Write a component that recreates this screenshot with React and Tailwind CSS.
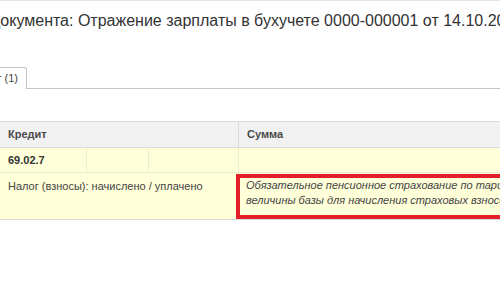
import React from "react";

export default function App() {
  const font = { fontFamily: '"Liberation Sans", Arial, sans-serif' };
  return (
    <div className="w-[500px] h-[300px] bg-white overflow-hidden relative" style={font}>
      <div className="h-[1px] bg-[#e4e4e4]" />
      <div className="pt-[10px] -ml-[9px] whitespace-nowrap text-[16px] leading-[19px] text-[#333]">
        документа: Отражение зарплаты в бухучете 0000-000001 от 14.10.2016 12:00:00
      </div>
      <div className="mt-[37px] flex items-end">
        <div className="-ml-[20px] w-[47px] h-[22px] border-t border-r border-[#c4c4c4] rounded-tr-[3px] flex items-center justify-end pr-[8px] text-[11px] text-[#444] whitespace-nowrap">
          ет (1)
        </div>
        <div className="flex-1 h-[1px] bg-[#c4c4c4]" />
      </div>
      <div className="mt-[32px] -ml-[1px] w-[620px] relative">
        <table className="border-collapse text-[11px] text-[#444] w-full table-fixed">
          <colgroup>
            <col className="w-[87px]" />
            <col className="w-[62px]" />
            <col className="w-[90px]" />
            <col />
          </colgroup>
          <thead>
            <tr className="h-[26px] bg-[#f2f2f2]">
              <th colSpan={3} className="border border-[#dadada] text-left font-bold pl-[8px] text-[#4a4a4a]">Кредит</th>
              <th className="border border-[#dadada] text-left font-bold pl-[8px] text-[#4a4a4a]">Сумма</th>
            </tr>
          </thead>
          <tbody>
            <tr className="h-[25px] bg-[#ffffda]">
              <td className="border border-[#ececd0] pl-[8px] font-bold text-[#333]">69.02.7</td>
              <td className="border border-[#ececd0]" />
              <td className="border border-[#ececd0]" />
              <td className="border border-[#ececd0]" />
            </tr>
            <tr className="h-[47px] bg-[#ffffda]">
              <td colSpan={3} className="border border-[#ececd0] border-b-[#dadada] pl-[8px] align-top pt-[5px] whitespace-nowrap">
                Налог (взносы): начислено / уплачено
              </td>
              <td className="border border-[#ececd0] border-b-[#dadada] align-top pl-[7px] pt-[5px] italic leading-[15px] whitespace-nowrap text-[#444]">
                Обязательное пенсионное страхование по тарифу в пределах
                <br />
                величины базы для начисления страховых взносов
              </td>
            </tr>
          </tbody>
        </table>
        <div className="absolute left-[237px] top-[53px] w-[380px] h-[45px] border-4 border-[#e3202a]" />
      </div>
    </div>
  );
}
